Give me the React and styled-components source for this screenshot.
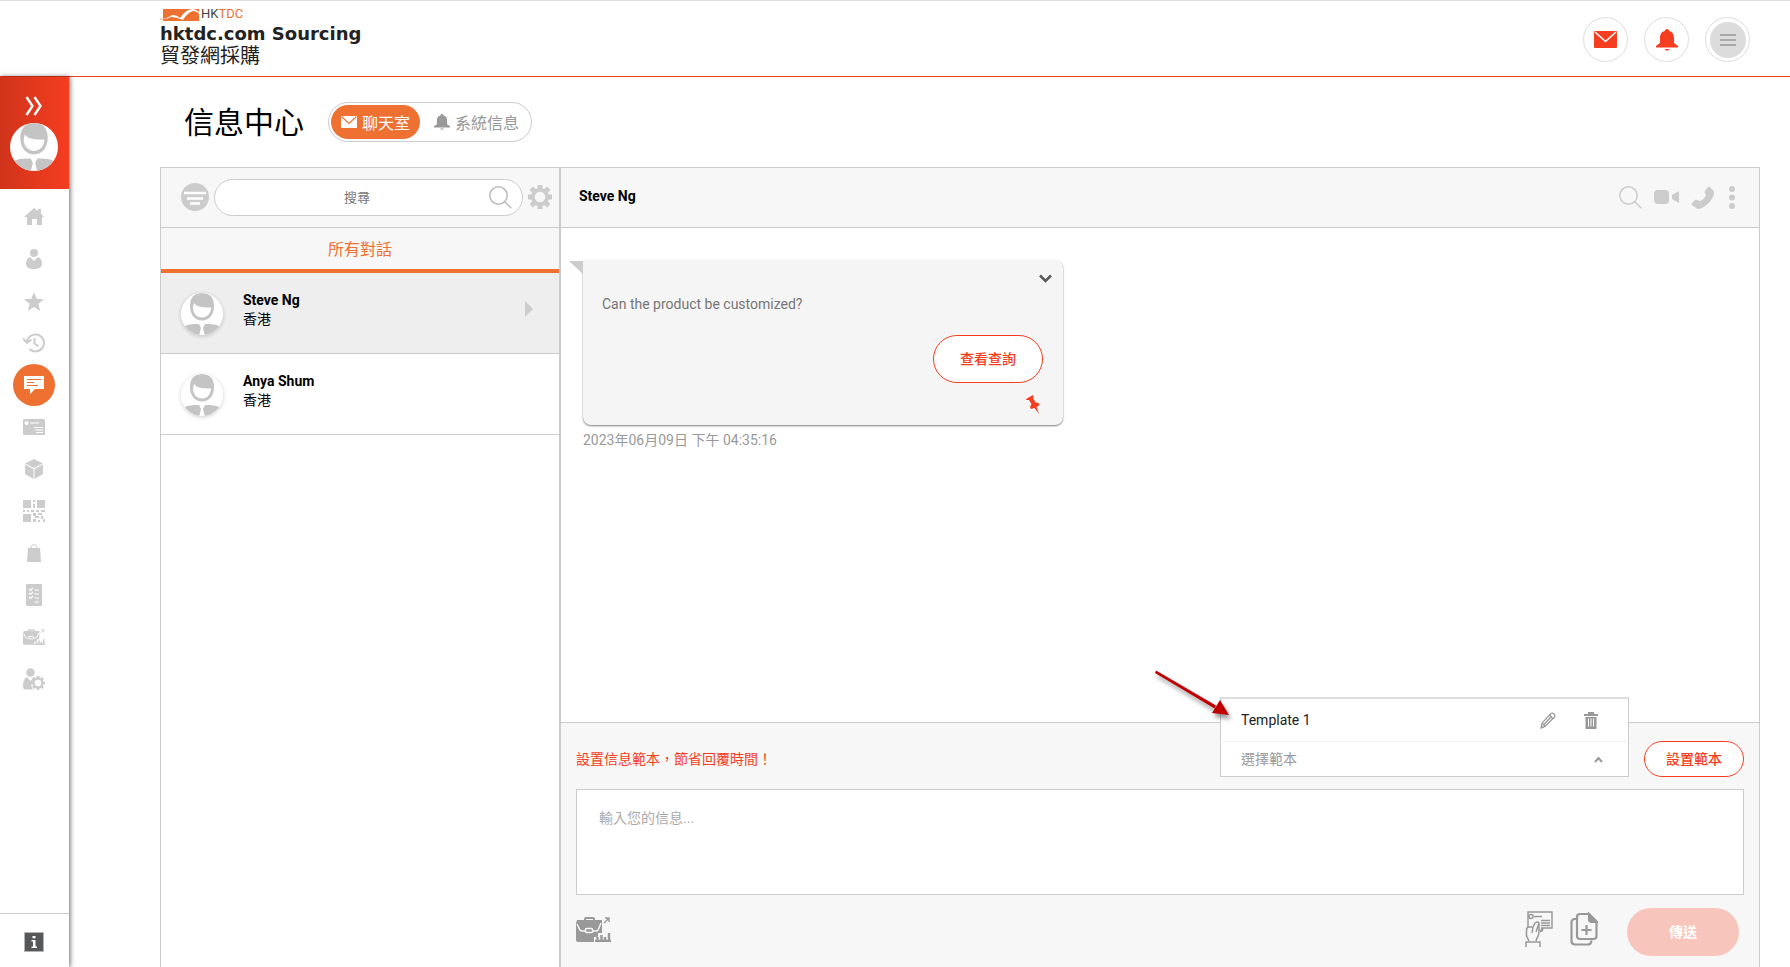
import React from "react";
import styled, { createGlobalStyle } from "styled-components";

const templates = ["Template 1"];

const contacts = [
  { name: "Steve Ng", place: "香港", active: true },
  { name: "Anya Shum", place: "香港", active: false },
];

const AvatarIcon = ({ size }) => (
  <svg width={size} height={size} viewBox="0 0 42 42">
    <clipPath id="avatarClip">
      <circle cx="21" cy="21" r="21" />
    </clipPath>
    <circle cx="21" cy="21" r="21" fill="#fff" />
    <g clipPath="url(#avatarClip)" fill="#c4c4c4">
      <path d="M21 0C13 0 9 5 9 13c0 9 5 14.500 12 14.500S33 22 33 13C33 5 29 0 21 0z" />
      <path d="M13 10c3 4 8 4.500 17 4.500 0 6-4 10-9 10s-9-4-9-10q0-2 1-4.500z" fill="#fff" />
      <path d="M3 34c3-3 9-3 15-3l2 4-2 8H3zM39 34c-3-3-9-3-15-3l-2 4 2 8h15z" />
    </g>
  </svg>
);

const HomeIcon = () => (
  <svg width="20" height="18" viewBox="0 0 20 18" fill="currentColor">
    <path d="M10 0l4 3V1h3v4.500L20 9h-2v8h-5v-6H8v6H3V9H0z" />
  </svg>
);

const UserIcon = () => (
  <svg width="16" height="20" viewBox="0 0 16 20" fill="currentColor">
    <circle cx="8" cy="4" r="4" />
    <path d="M4 8l4 4 4-4c3 1 4 4 4 7 0 4-4 5-8 5s-8-1-8-5c0-3 1-6 4-7z" />
  </svg>
);

const StarIcon = () => (
  <svg width="20" height="19" viewBox="0 0 20 19" fill="currentColor">
    <path d="M10 0l2.700 6.700L20 7.200l-5.600 4.600L16.200 19 10 15 3.800 19l1.800-7.200L0 7.200l7.300-.5z" />
  </svg>
);

const HistoryIcon = () => (
  <svg width="22" height="20" viewBox="0 0 22 20" fill="none" stroke="currentColor" strokeWidth="2">
    <path d="M4 9a8.500 8.500 0 1 1 2.500 7M0 5.500l4 4.500 4.500-3.500M11.500 5v5.500l4 3" />
  </svg>
);

const ChatIcon = () => (
  <svg width="20" height="20" viewBox="0 0 20 20">
    <path d="M0 1h20v13h-9l-5 5v-5H0z" fill="#fff" />
    <path d="M3 4.500h14M3 7.500h7M3 10.500h11" stroke="#ee7132" strokeWidth="1.200" />
  </svg>
);

const CardIcon = () => (
  <svg width="22" height="16" viewBox="0 0 22 16">
    <rect width="22" height="16" rx="1" fill="currentColor" />
    <circle cx="3.500" cy="4" r="2" fill="#fff" />
    <path d="M7 4h9M11 8.500h9M12 11h8M13 13.500h7" stroke="#fff" strokeWidth="1.200" />
  </svg>
);

const CubeIcon = () => (
  <svg width="18" height="20" viewBox="0 0 18 20" fill="currentColor">
    <path d="M9 0l9 4.500-9 4.500-9-4.500zM0 5.500l8.500 4.500v10L0 15zM18 5.500L9.500 10v10l8.500-5z" />
  </svg>
);

const QrIcon = () => (
  <svg width="22" height="22" viewBox="0 0 22 22" fill="currentColor">
    <path d="M0 0h8v8H0zM14 0h8v8h-8zM0 14h8v8H0z" />
    <path d="M10 0h2v2h-2zM10 4h2v4h-2zM0 10h2v2H0zM4 10h2v2H4zM8 10h3v2H8zM13 10h3v2h-3zM18 10h4v2h-4zM10 13h3v3h-3zM15 13h4v2h-4zM12 16h4v2h-4zM18 16h2v3h-2zM10 19h3v3h-3zM15 20h2v2h-2zM20 19h2v3h-2z" />
  </svg>
);

const BagIcon = () => (
  <svg width="14" height="18" viewBox="0 0 14 18">
    <path d="M1 4h12l1 14H0z" fill="currentColor" />
    <path d="M4 6V3c0-3 6-3 6 0v3" fill="none" stroke="currentColor" />
  </svg>
);

const ListIcon = () => (
  <svg width="16" height="22" viewBox="0 0 16 22">
    <rect width="16" height="22" rx="1" fill="currentColor" />
    <path
      d="M3 5l1.500 1.500L7 4M3 9l1.500 1.500L7 8M3 13l1.500 1.500L7 12M8.500 6H13M8.500 10H13M8.500 14H13M8.500 18H13"
      stroke="#fff"
      strokeWidth="1.200"
      fill="none"
    />
  </svg>
);

const BriefcaseIcon = ({ width, gap }) => (
  <svg width={width} height={Math.round((width * 25) / 35)} viewBox="0 0 35 25">
    <path d="M9 4V2q0-1 1-1h7q1 0 1 1v2" fill="none" stroke="currentColor" strokeWidth="2" />
    <path d="M1 3h25v13l-7 6v3H2q-2 0-2-2V6z" fill="currentColor" />
    <path d="M1 7l3 6q1 1 2 1h14q1 0 2-1l3-7" fill="none" stroke={gap} strokeWidth="1.400" />
    <rect x="9.500" y="11.500" width="7" height="4" rx="1" fill="currentColor" stroke={gap} strokeWidth="1.400" />
    <path d="M18 24v-4h4v-4h9v-1h4v10H18z" fill={gap} />
    <path d="M19 24h16M21.500 24v-4M25.500 24v-6M29 24v-4M33 24v-8" stroke="currentColor" strokeWidth="2.400" />
    <path d="M28 6l4-4M29 1h4v4" fill="none" stroke="currentColor" strokeWidth="1.400" />
  </svg>
);

const GearIcon = ({ size }) => (
  <svg width={size} height={size} viewBox="0 0 24 24">
    <circle cx="12" cy="12" r="7.200" fill="none" stroke="currentColor" strokeWidth="3.800" />
    <path
      d="M12 0v4M12 20v4M0 12h4M20 12h4M3.300 3.300l3 3M17.700 17.700l3 3M3.300 20.700l3-3M17.700 6.300l3-3"
      stroke="currentColor"
      strokeWidth="5"
    />
  </svg>
);

const UserGearIcon = () => (
  <svg width="22" height="22" viewBox="0 0 22 22">
    <circle cx="7.500" cy="4.500" r="4.200" fill="currentColor" />
    <path d="M4 9l3.500 4L11 9l2 1.500c-5 2-6 7-3 11H3c-2 0-3-1-3-4 0-4 1-7 4-8.500z" fill="currentColor" />
    <circle cx="15" cy="15" r="4.500" fill="none" stroke="currentColor" strokeWidth="2.400" />
    <path d="M15 8v3M15 19v3M8 15h3M19 15h3M10 10l2 2M18 18l2 2M10 20l2-2M18 12l2-2" stroke="currentColor" strokeWidth="2.600" />
  </svg>
);

const InfoIcon = () => (
  <svg width="20" height="20" viewBox="0 0 20 20">
    <rect x=".5" y=".5" width="19" height="19" fill="#555759" stroke="#b5b5b5" />
    <path d="M8.500 4h3v2.200h-3zM7.500 8h4v6.500H13V16H7.500v-1.500H9v-5H7.500z" fill="#fff" />
  </svg>
);

const DoubleChevron = () => (
  <svg width="18" height="20" viewBox="0 0 18 20" fill="none" stroke="#fff" strokeWidth="2.400">
    <path d="M1.500 1l6 9-6 9M9.500 1l6 9-6 9" />
  </svg>
);

const MailIcon = ({ width, line }) => (
  <svg width={width} height={Math.round(width * 0.74)} viewBox="0 0 23 17">
    <rect width="23" height="17" rx="1" fill="currentColor" />
    <path d="M1 1l10.500 9.500L22 1" fill="none" stroke={line} strokeWidth="1.600" />
  </svg>
);

const BellIcon = ({ size }) => (
  <svg width={size} height={size} viewBox="0 0 22 22" fill="currentColor">
    <path d="M11 0c1.500 0 2 1 2.200 2C17 3 18 6 18 9v5l4 3v1.500H0V17l4-3V9c0-3 1-6 4.800-7C9 1 9.500 0 11 0zM8.500 20h5q-2.500 3.500-5 0z" />
  </svg>
);

const MenuIcon = () => (
  <svg width="16" height="14" viewBox="0 0 16 14" stroke="#a8a8a8" strokeWidth="2">
    <path d="M0 2h16M0 7h16M0 12h16" />
  </svg>
);

const FilterIcon = () => (
  <svg width="28" height="28" viewBox="0 0 28 28">
    <circle cx="14" cy="14" r="14" fill="currentColor" />
    <path d="M3 10h22M6 15.500h16M9 20.500h10" stroke="#fff" strokeWidth="2.600" />
  </svg>
);

const SearchIcon = () => (
  <svg width="23" height="23" viewBox="0 0 23 23" fill="none" stroke="currentColor" strokeWidth="1.500">
    <circle cx="9.500" cy="9.500" r="8.700" />
    <path d="M15.800 15.800L22.300 22.300" />
  </svg>
);

const VideoIcon = () => (
  <svg width="25" height="14" viewBox="0 0 25 14" fill="currentColor">
    <rect width="15" height="14" rx="4" />
    <path d="M18 5l7-4v12l-7-4z" />
  </svg>
);

const PhoneIcon = () => (
  <svg width="23" height="23" viewBox="0 0 23 23" fill="currentColor">
    <path d="M17 1q1-1 2 0l3 3q1 1 1 3c0 6-9 15-15 16q-2 0-3-1l-4-3q-1-1 0-2l3-3q1-1 2 0l3 1c3-1 5-4 6-6l-1-2q-1-1 0-2z" />
  </svg>
);

const DotsIcon = () => (
  <svg width="6" height="23" viewBox="0 0 6 23" fill="currentColor">
    <circle cx="3" cy="3" r="3" />
    <circle cx="3" cy="11.500" r="3" />
    <circle cx="3" cy="20" r="3" />
  </svg>
);

const ChevronDown = () => (
  <svg width="13" height="9" viewBox="0 0 13 9" fill="none" stroke="#5a5a5a" strokeWidth="2.600">
    <path d="M1 1.500l5.500 5.500L12 1.500" />
  </svg>
);

const PinIcon = () => (
  <svg width="14" height="19" viewBox="0 0 14 19" fill="#f53d20">
    <path d="M0 4l7-4 .5 1.500L7 3l2.500 4.500 3 .5 1 2-3 2L13 19l-4.500-6L5 14l-1-2 1.500-3L3 5 .5 5z" />
  </svg>
);

const PencilIcon = () => (
  <svg width="16" height="17" viewBox="0 0 16 17" fill="none" stroke="currentColor" strokeWidth="1.200">
    <path d="M1 16l1-5L11 1.500q1.500-1 3 .5t.5 3L5 14.500zM2 11l3 3.500M9.500 3l3.500 4M4 12.500l7-7.500M1 16l2-.5-1.500-1.500z" />
  </svg>
);

const TrashIcon = () => (
  <svg width="14" height="17" viewBox="0 0 14 17">
    <path d="M0 2h4V0h6v2h4v2H0zM1.500 5h11v12h-11z" fill="currentColor" />
    <path d="M4.500 6.500v8M7 6.500v8M9.500 6.500v8" stroke="#fff" />
  </svg>
);

const CaretUp = () => (
  <svg width="9" height="7" viewBox="0 0 9 7" fill="none" stroke="#999" strokeWidth="2">
    <path d="M1 6l3.500-4L8 6" />
  </svg>
);

const HandCardIcon = () => (
  <svg width="28" height="36" viewBox="0 0 28 36" fill="none" stroke="currentColor" strokeWidth="1.500">
    <path d="M3 16V1h24v16H16M9 5.500h8M16 9.500h9M16 12h9M16 14.500h9" />
    <circle cx="6" cy="5.500" r="2" />
    <path d="M4 30l-2.500-5V19q0-3 3-3H8l2-4q3-2 4 0l-3 9M8 16l-1 6M14 13v6q0 6-2 8l-1 3" />
    <path d="M15 20q3 0 2-3" strokeWidth="2.400" />
    <path d="M1 36v-5h14v5" />
  </svg>
);

const CopyPlusIcon = () => (
  <svg width="28" height="34" viewBox="0 0 28 34" fill="none" stroke="currentColor" strokeWidth="2.200">
    <path d="M10 2h9l7.500 8v14q0 3-3 3H10q-3 0-3-3V5q0-3 3-3z" />
    <path d="M19 2v5q0 3 3 3h5z" fill="currentColor" />
    <path d="M6 7H5Q1.500 7 1.500 11v18q0 3.500 3.500 3.500h13q3 0 3.500-4M16.500 13v10M11.500 18h10" />
  </svg>
);

const LogoMark = () => (
  <svg width="41" height="13" viewBox="0 0 41 13">
    <path d="M3 1h36v12H3z" fill="#ee7132" />
    <path d="M0 11q7 0 12-4 5 0 8 3 6-9 13-9 6 1 8 7-4-5-8-5-6 2-10 9-7-3-12-3-5 3-11 2z" fill="#fff" />
    <path d="M0 11q3 1 7-1" stroke="#f2a07a" fill="none" />
  </svg>
);

const ArrowMark = () => (
  <svg width="90" height="64" viewBox="0 0 90 64">
    <g fill="#c00000">
      <path d="M6 2.500l60 35-1.500 3L5 5z" />
      <path d="M79 47l-17-2 8-13z" />
    </g>
  </svg>
);

const navIcons = [
  { label: "首頁", icon: <HomeIcon /> },
  { label: "帳戶", icon: <UserIcon /> },
  { label: "收藏", icon: <StarIcon /> },
  { label: "記錄", icon: <HistoryIcon /> },
  { label: "信息", icon: <ChatIcon />, active: true },
  { label: "名片", icon: <CardIcon /> },
  { label: "產品", icon: <CubeIcon /> },
  { label: "二維碼", icon: <QrIcon /> },
  { label: "訂單", icon: <BagIcon /> },
  { label: "清單", icon: <ListIcon /> },
  { label: "業務", icon: <BriefcaseIcon width={22} gap="#fff" /> },
  { label: "設定", icon: <UserGearIcon /> },
];

const App = () => {
  return (
    <Page>
      <GlobalStyle />
      <Header>
        <Brand href="#">
          <BrandTop>
            <LogoMark />
            <BrandName>
              HK<em>TDC</em>
            </BrandName>
          </BrandTop>
          <BrandTitle>hktdc.com Sourcing</BrandTitle>
          <BrandChinese>貿發網採購</BrandChinese>
        </Brand>
        <HeaderActions>
          <RoundButton aria-label="信息">
            <MailIcon width={23} line="#fff" />
          </RoundButton>
          <RoundButton aria-label="通知">
            <BellIcon size={22} />
          </RoundButton>
          <RoundButton aria-label="選單">
            <MenuDisc>
              <MenuIcon />
            </MenuDisc>
          </RoundButton>
        </HeaderActions>
      </Header>
      <Body>
        <Sidebar>
          <SidebarTop>
            <IconButton aria-label="展開">
              <DoubleChevron />
            </IconButton>
            <AvatarIcon size={48} />
          </SidebarTop>
          <Nav>
            {navIcons.map((item) => (
              <NavLink href="#" key={item.label} aria-label={item.label} $active={item.active}>
                {item.icon}
              </NavLink>
            ))}
          </Nav>
          <SidebarBottom>
            <IconButton aria-label="說明">
              <InfoIcon />
            </IconButton>
          </SidebarBottom>
        </Sidebar>
        <Main>
          <TitleRow>
            <Title>信息中心</Title>
            <Switcher>
              <SwitchButton $active>
                <MailIcon width={16} line="#ee7132" />
                聊天室
              </SwitchButton>
              <SwitchButton>
                <BellIcon size={16} />
                系統信息
              </SwitchButton>
            </Switcher>
          </TitleRow>
          <Messenger>
            <Conversations>
              <Bar>
                <IconButton aria-label="篩選">
                  <FilterIcon />
                </IconButton>
                <SearchBox>
                  <SearchInput aria-label="搜尋" placeholder="搜尋" />
                  <SearchIcon />
                </SearchBox>
                <IconButton aria-label="設定">
                  <GearIcon size={24} />
                </IconButton>
              </Bar>
              <Tab>所有對話</Tab>
              {contacts.map((contact) => (
                <Contact key={contact.name} $active={contact.active}>
                  <ContactAvatar>
                    <AvatarIcon size={42} />
                  </ContactAvatar>
                  <ContactText>
                    <Name>{contact.name}</Name>
                    <Place>{contact.place}</Place>
                  </ContactText>
                  {contact.active && <Pointer />}
                </Contact>
              ))}
            </Conversations>
            <Chat>
              <ChatHeader>
                <Name>Steve Ng</Name>
                <ChatTools>
                  <IconButton aria-label="搜尋對話">
                    <SearchIcon />
                  </IconButton>
                  <IconButton aria-label="視像通話">
                    <VideoIcon />
                  </IconButton>
                  <IconButton aria-label="語音通話">
                    <PhoneIcon />
                  </IconButton>
                  <MoreButton aria-label="更多">
                    <DotsIcon />
                  </MoreButton>
                </ChatTools>
              </ChatHeader>
              <Messages>
                <Bubble>
                  <BubbleTop>
                    <IconButton aria-label="收起">
                      <ChevronDown />
                    </IconButton>
                  </BubbleTop>
                  <BubbleText>Can the product be customized?</BubbleText>
                  <BubbleActions>
                    <OutlineButton $large>查看查詢</OutlineButton>
                    <PinButton aria-label="置頂">
                      <PinIcon />
                    </PinButton>
                  </BubbleActions>
                </Bubble>
                <Time>2023年06月09日 下午 04:35:16</Time>
              </Messages>
              <Composer>
                <TemplateRow>
                  <Hint>設置信息範本，節省回覆時間！</Hint>
                  <Picker>
                    <TemplateMenu>
                      {templates.map((template) => (
                        <TemplateItem key={template}>
                          <TemplateName>{template}</TemplateName>
                          <IconButton aria-label="編輯範本">
                            <PencilIcon />
                          </IconButton>
                          <IconButton aria-label="刪除範本">
                            <TrashIcon />
                          </IconButton>
                        </TemplateItem>
                      ))}
                    </TemplateMenu>
                    <PickerSelect aria-label="選擇範本" defaultValue="">
                      <option value="">選擇範本</option>
                      {templates.map((template) => (
                        <option key={template}>{template}</option>
                      ))}
                    </PickerSelect>
                    <CaretUp />
                    <Callout>
                      <ArrowMark />
                    </Callout>
                  </Picker>
                  <OutlineButton>設置範本</OutlineButton>
                </TemplateRow>
                <MessageInput aria-label="信息" placeholder="輸入您的信息..." />
                <ActionRow>
                  <ToolButton aria-label="業務">
                    <BriefcaseIcon width={35} gap="#f7f7f7" />
                  </ToolButton>
                  <SendTools>
                    <ToolButton aria-label="傳送名片">
                      <HandCardIcon />
                    </ToolButton>
                    <ToolButton aria-label="加入檔案">
                      <CopyPlusIcon />
                    </ToolButton>
                    <SendButton>傳送</SendButton>
                  </SendTools>
                </ActionRow>
              </Composer>
            </Chat>
          </Messenger>
        </Main>
      </Body>
    </Page>
  );
};

export default App;

const GlobalStyle = createGlobalStyle`
  * {
    box-sizing: border-box;
  }

  body {
    margin: 0;
    background: #fff;
  }

  body, button, input, select, textarea {
    font-family: Roboto, "Noto Sans CJK TC", sans-serif;
    font-size: 14px;
  }

  svg {
    display: block;
    flex-shrink: 0;
  }
`;

const Page = styled.div`
  min-height: 100vh;
  display: flex;
  flex-direction: column;
  border-top: 1px solid #ddd;
`;

const Header = styled.header`
  height: 76px;
  display: flex;
  justify-content: space-between;
  align-items: flex-start;
  padding: 0 40px 0 160px;
  border-bottom: 1px solid #f53d20;
`;

const Brand = styled.a`
  display: flex;
  flex-direction: column;
  padding-top: 6px;
  color: #222;
  text-decoration: none;
`;

const BrandTop = styled.div`
  display: flex;
  align-items: center;
  height: 14px;
`;

const BrandName = styled.span`
  font-size: 13px;
  line-height: 14px;
  color: #444;

  em {
    font-style: normal;
    color: #ee7132;
  }
`;

const BrandTitle = styled.strong`
  font-family: "DejaVu Sans", sans-serif;
  font-size: 18px;
  line-height: 25px;
`;

const BrandChinese = styled.span`
  font-size: 20px;
  line-height: 20px;
`;

const HeaderActions = styled.div`
  display: flex;
  gap: 16px;
  padding-top: 16px;
`;

const RoundButton = styled.button`
  width: 45px;
  height: 45px;
  display: flex;
  align-items: center;
  justify-content: center;
  padding: 0;
  border: 1px solid #ddd;
  border-radius: 50%;
  background: #fff;
  color: #f53d20;
`;

const MenuDisc = styled.span`
  width: 36px;
  height: 36px;
  display: flex;
  align-items: center;
  justify-content: center;
  border-radius: 50%;
  background: #dcdcdc;
`;

const IconButton = styled.button`
  padding: 0;
  border: none;
  background: none;
  color: inherit;
  cursor: pointer;
`;

const Body = styled.div`
  flex: 1;
  display: flex;
`;

const Sidebar = styled.aside`
  width: 69px;
  flex-shrink: 0;
  display: flex;
  flex-direction: column;
  box-shadow: 1px 0 5px rgba(0, 0, 0, 0.6);
`;

const SidebarTop = styled.div`
  height: 112px;
  display: flex;
  flex-direction: column;
  align-items: center;
  gap: 7px;
  padding: 19px 1px 0 0;
  background: linear-gradient(90deg, #cf341b, #f53d20);
`;

const Nav = styled.nav`
  flex: 1;
  display: flex;
  flex-direction: column;
  align-items: center;
  padding: 7px 1px 0 0;
`;

const NavLink = styled.a`
  width: 42px;
  height: 42px;
  display: flex;
  align-items: center;
  justify-content: center;
  border-radius: 50%;
  color: #ccc;
  background: ${(props) => (props.$active ? "#ee7132" : "transparent")};
`;

const SidebarBottom = styled.div`
  height: 54px;
  display: flex;
  align-items: center;
  justify-content: center;
  padding: 2px 1px 0 0;
  border-top: 1px solid #ccc;
`;

const Main = styled.main`
  flex: 1;
  min-width: 0;
  display: flex;
  flex-direction: column;
  padding: 0 30px 0 91px;
`;

const TitleRow = styled.div`
  height: 90px;
  display: flex;
  align-items: center;
  gap: 24px;
  padding-left: 24px;
`;

const Title = styled.h1`
  margin: 0;
  padding-top: 2px;
  font-size: 30px;
  line-height: 40px;
  font-weight: 400;
  color: #000;
`;

const Switcher = styled.div`
  height: 40px;
  display: flex;
  align-items: center;
  padding: 0 2px;
  border: 1px solid #ccc;
  border-radius: 20px;
`;

const SwitchButton = styled.button`
  height: 34px;
  display: flex;
  align-items: center;
  gap: 5px;
  padding: 0 10px 1px ${(props) => (props.$active ? "10px" : "14px")};
  border: none;
  border-radius: 17px;
  font-size: 16px;
  color: ${(props) => (props.$active ? "#fff" : "#999")};
  background: ${(props) => (props.$active ? "#ee7132" : "transparent")};
`;

const Messenger = styled.section`
  flex: 1;
  display: flex;
  border: 1px solid #ccc;
  border-bottom: none;
`;

const Conversations = styled.div`
  width: 400px;
  flex-shrink: 0;
  border-right: 2px solid #ccc;
`;

const Bar = styled.div`
  height: 60px;
  display: flex;
  align-items: center;
  gap: 5px;
  padding: 0 7px 1px 20px;
  border-bottom: 1px solid #ccc;
  background: #f7f7f7;
  color: #ccc;
`;

const SearchBox = styled.div`
  flex: 1;
  height: 37px;
  display: flex;
  align-items: center;
  padding: 0 10px;
  border: 1px solid #ccc;
  border-radius: 19px;
  background: #fff;
  color: #bbb;
`;

const SearchInput = styled.input`
  flex: 1;
  min-width: 0;
  padding: 0;
  border: none;
  outline: none;
  background: none;
  font-size: 13px;
  text-align: center;

  &::placeholder {
    color: #757575;
  }
`;

const Tab = styled.button`
  width: 100%;
  height: 45px;
  display: block;
  padding: 0 0 2px;
  border: none;
  border-bottom: 4px solid #ee7132;
  background: #f7f7f7;
  font-size: 16px;
  color: #ee7132;
`;

const Contact = styled.div`
  height: 81px;
  display: flex;
  align-items: flex-start;
  padding: 18px 26px 0 20px;
  border-bottom: 1px solid #ccc;
  background: ${(props) => (props.$active ? "#eee" : "#fff")};
`;

const ContactAvatar = styled.div`
  margin: 2px 20px 0 0;
  border-radius: 50%;
  box-shadow: 0 1px 4px rgba(0, 0, 0, 0.2);
`;

const ContactText = styled.div`
  flex: 1;
`;

const Name = styled.div`
  font-weight: 700;
  line-height: 19px;
  color: #000;
`;

const Place = styled.div`
  line-height: 19px;
  color: #000;
`;

const Pointer = styled.span`
  margin-top: 10px;
  border-left: 8px solid #ccc;
  border-top: 8px solid transparent;
  border-bottom: 8px solid transparent;
`;

const Chat = styled.div`
  flex: 1;
  min-width: 0;
  display: flex;
  flex-direction: column;
`;

const ChatHeader = styled.div`
  height: 60px;
  display: flex;
  align-items: center;
  justify-content: space-between;
  padding: 0 24px 3px 18px;
  border-bottom: 1px solid #ccc;
  background: #f7f7f7;
`;

const ChatTools = styled.div`
  display: flex;
  align-items: center;
  gap: 12px;
  padding-top: 2px;
  color: #ccc;
`;

const MoreButton = styled(IconButton)`
  margin-left: 3px;
`;

const Messages = styled.div`
  flex: 1;
  padding: 32px 22px;
`;

const Bubble = styled.article`
  position: relative;
  max-width: 480px;
  min-height: 165px;
  padding: 14px 20px 10px 19px;
  border-radius: 8px;
  border-top-left-radius: 0;
  background: #f5f5f5;
  box-shadow: 0 1px 2px rgba(0, 0, 0, 0.5);

  &::before {
    content: "";
    position: absolute;
    top: 1px;
    left: -14px;
    border-top: 13px solid #ccc;
    border-left: 14px solid transparent;
  }
`;

const BubbleTop = styled.div`
  height: 20px;
  display: flex;
  justify-content: flex-end;
  align-items: flex-start;
  margin-right: -9px;
`;

const BubbleText = styled.p`
  margin: 0 0 21px;
  line-height: 20px;
  color: #757575;
`;

const BubbleActions = styled.div`
  display: flex;
  flex-direction: column;
  align-items: flex-end;
  gap: 12px;
`;

const OutlineButton = styled.button`
  width: ${(props) => (props.$large ? "110px" : "100px")};
  height: ${(props) => (props.$large ? "48px" : "36px")};
  padding: 0 0 2px;
  border: 1px solid #f53d20;
  border-radius: 24px;
  background: #fff;
  font-weight: 500;
  color: #f53d20;
`;

const PinButton = styled(IconButton)`
  margin-right: 3px;
`;

const Time = styled.time`
  display: block;
  margin-top: 5px;
  line-height: 20px;
  color: #999;
`;

const Composer = styled.div`
  padding: 18px 15px 11px;
  border-top: 1px solid #ccc;
  background: #f7f7f7;
`;

const TemplateRow = styled.div`
  display: flex;
  align-items: center;
  gap: 15px;
`;

const Hint = styled.p`
  flex: 1;
  margin: 0;
  padding-bottom: 2px;
  color: #f53d20;
`;

const Picker = styled.div`
  position: relative;
  width: 409px;
  height: 36px;
  display: flex;
  align-items: center;
  padding-right: 25px;
  border: 1px solid #ccc;
  border-top-color: #f3f3f3;
  background: #fff;
`;

const PickerSelect = styled.select`
  flex: 1;
  height: 34px;
  padding: 0 20px;
  border: none;
  outline: none;
  appearance: none;
  background: none;
  color: #999;
`;

const TemplateMenu = styled.ul`
  position: absolute;
  bottom: 100%;
  left: -1px;
  right: -1px;
  margin: 0;
  padding: 0;
  border: 1px solid #ccc;
  border-top: 2px solid #ddd;
  border-bottom: 1px solid #f3f3f3;
  background: #fff;
  list-style: none;
`;

const TemplateItem = styled.li`
  height: 42px;
  display: flex;
  align-items: center;
  gap: 28px;
  padding: 0 30px 0 20px;
  color: #999;
`;

const TemplateName = styled.span`
  flex: 1;
  color: #222;
`;

const Callout = styled.div`
  position: absolute;
  left: -71px;
  bottom: 44px;
  pointer-events: none;
  filter: drop-shadow(2px 4px 2px rgba(0, 0, 0, 0.4));
`;

const MessageInput = styled.textarea`
  width: 100%;
  height: 106px;
  display: block;
  margin: 12px 0 13px;
  padding: 18px 22px;
  border: 1px solid #ccc;
  outline: none;
  resize: none;
  background: #fff;
  line-height: 20px;

  &::placeholder {
    color: #aaa;
  }
`;

const ActionRow = styled.div`
  display: flex;
  align-items: center;
  justify-content: space-between;
  padding-right: 5px;
  color: #999;
`;

const SendTools = styled.div`
  display: flex;
  align-items: center;
  gap: 17px;
`;

const ToolButton = styled(IconButton)`
  padding-bottom: 6px;
`;

const SendButton = styled.button`
  width: 112px;
  height: 48px;
  margin-left: 12px;
  padding: 0 0 2px;
  border: none;
  border-radius: 24px;
  background: #f8c5bd;
  font-weight: 700;
  color: #fff;
`;
